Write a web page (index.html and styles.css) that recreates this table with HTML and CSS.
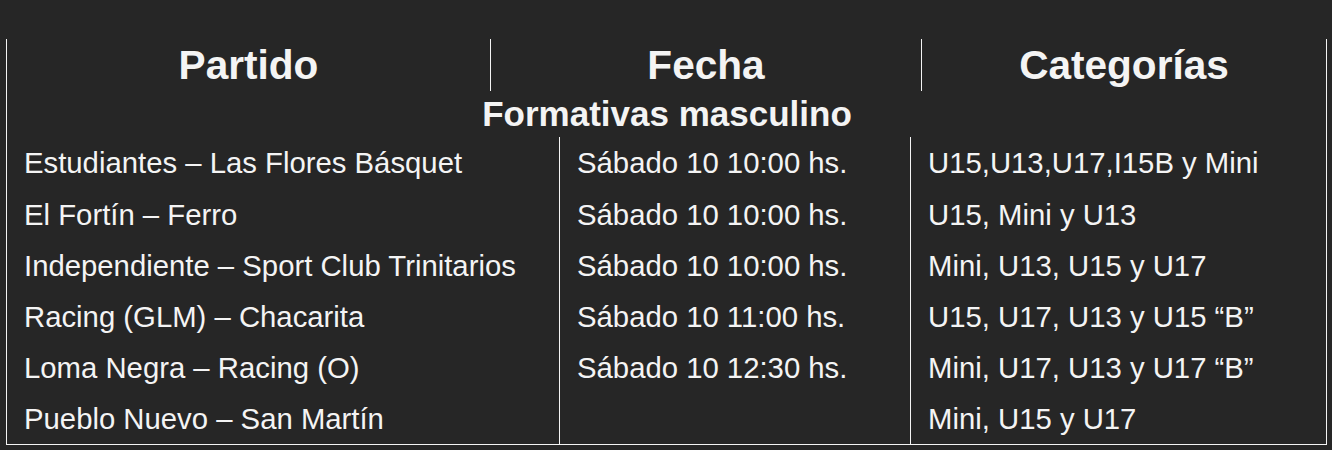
FILE: index.html
```html
<!DOCTYPE html>
<html lang="es">
<head>
<meta charset="utf-8">
<title>Partidos</title>
<link rel="stylesheet" href="styles.css">
</head>
<body>
<div class="page">
  <div class="schedule">
    <div class="head-row">
      <div class="head-cell">Partido</div>
      <div class="head-cell sep">Fecha</div>
      <div class="head-cell sep">Categorías</div>
    </div>
    <div class="section-row">Formativas masculino</div>
    <div class="body">
      <div class="row">
        <div class="cell">Estudiantes – Las Flores Básquet</div>
        <div class="cell sep">Sábado 10 10:00 hs.</div>
        <div class="cell sep">U15,U13,U17,I15B y Mini</div>
      </div>
      <div class="row">
        <div class="cell">El Fortín – Ferro</div>
        <div class="cell sep">Sábado 10 10:00 hs.</div>
        <div class="cell sep">U15, Mini y U13</div>
      </div>
      <div class="row">
        <div class="cell">Independiente – Sport Club Trinitarios</div>
        <div class="cell sep">Sábado 10 10:00 hs.</div>
        <div class="cell sep">Mini, U13, U15 y U17</div>
      </div>
      <div class="row">
        <div class="cell">Racing (GLM) – Chacarita</div>
        <div class="cell sep">Sábado 10 11:00 hs.</div>
        <div class="cell sep">U15, U17, U13 y U15 “B”</div>
      </div>
      <div class="row">
        <div class="cell">Loma Negra – Racing (O)</div>
        <div class="cell sep">Sábado 10 12:30 hs.</div>
        <div class="cell sep">Mini, U17, U13 y U17 “B”</div>
      </div>
      <div class="row">
        <div class="cell">Pueblo Nuevo – San Martín</div>
        <div class="cell sep"></div>
        <div class="cell sep">Mini, U15 y U17</div>
      </div>
    </div>
  </div>
</div>
</body>
</html>
```
FILE: styles.css
```css
html, body {
  margin: 0;
  padding: 0;
  background: #262626;
}
body {
  font-family: "Liberation Sans", Arial, Helvetica, sans-serif;
  color: #f4f4f4;
}
.page {
  padding: 39px 5px 0 6px;
}
.schedule {
  width: 1319px;
  border-left: 1px solid #f4f4f4;
  border-right: 1px solid #f4f4f4;
  border-bottom: 1px solid #f4f4f4;
}
.head-row {
  display: grid;
  grid-template-columns: 483px 431px 1fr;
  height: 52px;
}
.head-cell {
  display: flex;
  align-items: center;
  justify-content: center;
  font-size: 40.6px;
  font-weight: bold;
}
.sep {
  border-left: 1px solid #f4f4f4;
}
.section-row {
  height: 46px;
  display: flex;
  align-items: center;
  justify-content: center;
  font-size: 35px;
  font-weight: bold;
  padding-left: 1px;
}
.row {
  display: grid;
  grid-template-columns: 552px 351px 1fr;
  height: 51px;
}
.row:first-child {
  height: 52px;
}
.cell {
  display: flex;
  align-items: center;
  padding-left: 17px;
  font-size: 29.3px;
  white-space: nowrap;
}
.cell.sep {
  padding-left: 17px;
}
```
